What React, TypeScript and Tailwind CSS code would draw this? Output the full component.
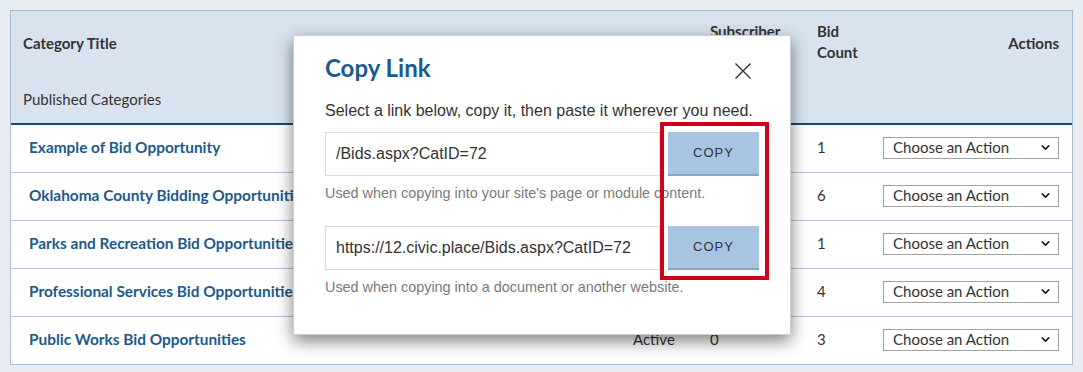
import { ChevronDown } from "lucide-react";

const ROWS = [
  { title: "Example of Bid Opportunity", subs: 0, bids: 1 },
  { title: "Oklahoma County Bidding Opportunities", subs: 0, bids: 6 },
  { title: "Parks and Recreation Bid Opportunities", subs: 0, bids: 1 },
  { title: "Professional Services Bid Opportunities", subs: 0, bids: 4 },
  { title: "Public Works Bid Opportunities", subs: 0, bids: 3 },
];

const COLS = "grid grid-cols-[610px_77px_107px_66px_1fr]";

function ActionSelect() {
  return (
    <div className="flex h-[22px] w-[176px] items-center justify-between border border-[#a3a3a3] bg-white pl-[9px] pr-[6px] text-[15px] text-[#333]">
      <span>Choose an Action</span>
      <ChevronDown size={13} strokeWidth={3} className="text-[#222]" />
    </div>
  );
}

function LinkField({ value, help }: { value: string; help: string }) {
  return (
    <div>
      <div className="flex gap-[8px]">
        <div className="flex h-[44px] w-[335px] items-center border border-[#d9dee4] bg-white pl-[10px] text-[16px] text-[#333]">
          {value}
        </div>
        <button className="h-[44px] w-[91px] border-b-2 border-[#8ba5c1] bg-[#a7c4e2] text-[13px] tracking-[1px] text-[#333]">
          COPY
        </button>
      </div>
      <p className="mt-[8px] text-[14.4px] leading-[18px] text-[#7a7a7a]">{help}</p>
    </div>
  );
}

export default function App() {
  return (
    <div className="relative h-[372px] w-[1083px] overflow-hidden bg-[#e8edf3] p-[10px] font-['Lato',sans-serif] text-[15px] text-[#333]">
      <div className="border border-[#a9bcd2] bg-white">
        {/* header */}
        <div className={`${COLS} h-[114px] border-b-2 border-[#0f4c81] bg-[#d9e3ef] font-bold leading-[21px]`}>
          <div className="pl-[12px] pt-[22px]">
            <div>Category Title</div>
            <div className="mt-[35px] font-normal">Published Categories</div>
          </div>
          <div className="pl-[12px] pt-[22px]">Status</div>
          <div className="pl-[12px] pt-[10px]">
            Subscriber
            <br />
            Count
          </div>
          <div className="pl-[12px] pt-[10px]">
            Bid
            <br />
            Count
          </div>
          <div className="pr-[13px] pt-[22px] text-right">Actions</div>
        </div>

        {/* rows */}
        {ROWS.map((r, i) => {
          const last = i === ROWS.length - 1;
          return (
            <div
              key={r.title}
              className={`${COLS} items-center pb-[2px] ${last ? "h-[47px]" : "h-[48px] border-b border-[#b8c7d9]"}`}
            >
              <div className="whitespace-nowrap pl-[18px] text-[15.4px] font-bold text-[#1b5a8c]">{r.title}</div>
              <div className="pl-[12px]">Active</div>
              <div className="pl-[12px]">{r.subs}</div>
              <div className="pl-[12px]">{r.bids}</div>
              <div className="flex justify-end pr-[13px]">
                <ActionSelect />
              </div>
            </div>
          );
        })}
      </div>

      {/* copy link dialog */}
      <div className="absolute left-[293px] top-[35px] h-[300px] w-[498px] border border-[#c9d0d9] bg-white px-[31px] pt-[18px] font-['Liberation_Sans',Arial,sans-serif] shadow-[0_6px_16px_rgba(0,0,0,0.5)]">
        <h2 className="font-['Lato',sans-serif] text-[24px] font-bold leading-[28px] text-[#1b5a8c]">Copy Link</h2>
        <button className="absolute right-[39px] top-[27px] text-[#333]">
          <svg width="16" height="16" viewBox="0 0 16 16" fill="none" stroke="currentColor" strokeWidth="1.4">
            <path d="M0.5 0.5L15.5 15.5M15.5 0.5L0.5 15.5" />
          </svg>
        </button>
        <p className="mt-[19px] text-[16px] leading-[20px] text-[#333]">
          Select a link below, copy it, then paste it wherever you need.
        </p>
        <div className="mt-[11px]">
          <LinkField value="/Bids.aspx?CatID=72" help="Used when copying into your site's page or module content." />
        </div>
        <div className="mt-[24px]">
          <LinkField
            value="https://12.civic.place/Bids.aspx?CatID=72"
            help="Used when copying into a document or another website."
          />
        </div>
      </div>

      {/* highlight */}
      <div className="absolute left-[660px] top-[122px] h-[158px] w-[109px] border-4 border-[#d0021b]" />
    </div>
  );
}
